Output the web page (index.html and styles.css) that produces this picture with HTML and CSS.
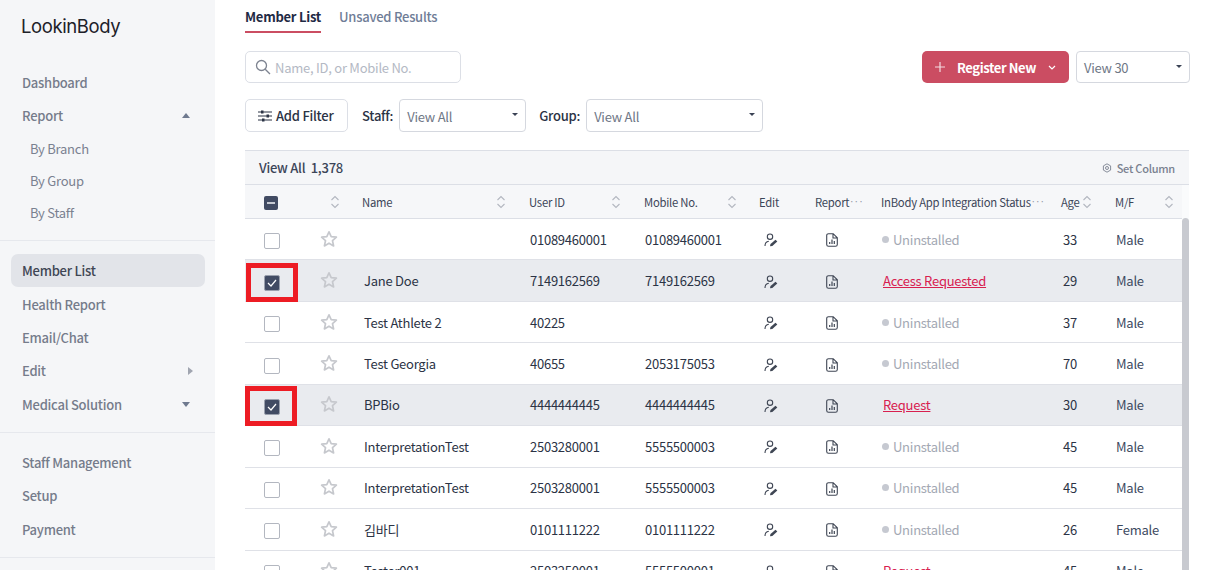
FILE: index.html
```html
<!DOCTYPE html>
<html lang="en">
<head>
<meta charset="utf-8">
<title>LookinBody</title>
<link rel="stylesheet" href="styles.css">
</head>
<body>
<svg class="defs" width="0" height="0">
  <symbol id="star" viewBox="0 0 18 18"><path d="M9 1.800l2.200 4.800 5.200.6-3.900 3.500 1.100 5.200L9 13.200l-4.600 2.700 1.100-5.200L1.600 7.200l5.200-.6z" fill="none" stroke="currentColor" stroke-width="1.700" stroke-linejoin="round"/></symbol>
  <symbol id="sort" viewBox="0 0 10 14"><path d="M1.500 5L5 1.500 8.500 5M1.500 9L5 12.500 8.500 9" fill="none" stroke="currentColor" stroke-width="1.100"/></symbol>
  <symbol id="edit" viewBox="0 0 14 14"><circle cx="6" cy="3.700" r="2.700" fill="none" stroke="currentColor" stroke-width="1.100"/><path d="M1 13c0-2.800 1.300-4.400 3.800-4.700" fill="none" stroke="currentColor" stroke-width="1.100"/><path d="M6 13.300l.5-2.200 5-4.300 1.800 1.800-5 4.300z" fill="currentColor"/></symbol>
  <symbol id="report" viewBox="0 0 12 14"><path d="M2.500.7h4.700L11.300 4.800V11.500a1.800 1.800 0 0 1-1.800 1.800h-7a1.800 1.800 0 0 1-1.800-1.800V2.500A1.800 1.800 0 0 1 2.500.7zM7 .7v4.300h4.300" fill="none" stroke="currentColor" stroke-width="1.100"/><path d="M3.700 11V9M6 11V6.500M8.300 11V8" stroke="currentColor" stroke-width="1.200"/></symbol>
</svg>
<div class="app">
  <aside class="sidebar">
    <div class="logo">LookinBody</div>
    <nav class="group group-first">
      <a class="item">Dashboard</a>
      <a class="item">Report<i class="caret caret-up"></i></a>
      <a class="sub">By Branch</a>
      <a class="sub">By Group</a>
      <a class="sub">By Staff</a>
    </nav>
    <nav class="group group-second">
      <a class="item active">Member List</a>
      <a class="item">Health Report</a>
      <a class="item">Email/Chat</a>
      <a class="item">Edit<i class="caret caret-right"></i></a>
      <a class="item">Medical Solution<i class="caret caret-down"></i></a>
    </nav>
    <nav class="group group-third">
      <a class="item">Staff Management</a>
      <a class="item">Setup</a>
      <a class="item">Payment</a>
    </nav>
  </aside>
  <main class="main">
    <div class="tabs">
      <a class="tab tab-active">Member List</a>
      <a class="tab">Unsaved Results</a>
    </div>
    <div class="bar bar-top">
      <label class="search">
        <svg class="search-icon" viewBox="0 0 16 16"><circle cx="6.500" cy="6.500" r="5" fill="none" stroke="currentColor" stroke-width="1.300"/><path d="M10.200 10.200L15 15" stroke="currentColor" stroke-width="1.300"/></svg>
        <span>Name, ID, or Mobile No.</span>
      </label>
      <div class="spring"></div>
      <button class="register">
        <svg class="plus" viewBox="0 0 10 10"><path d="M5 0v10M0 5h10" stroke="currentColor" stroke-width="1.200"/></svg>
        <span>Register New</span>
        <svg class="chev" viewBox="0 0 8 5"><path d="M1 1l3 3 3-3" fill="none" stroke="currentColor" stroke-width="1.200"/></svg>
      </button>
      <div class="select select-view">View 30<i class="sel-caret"></i></div>
    </div>
    <div class="bar bar-filter">
      <button class="filter">
        <svg class="filter-icon" viewBox="0 0 14 12"><path d="M0 2h14M0 6h14M0 10h14" stroke="currentColor" stroke-width="1.200"/><rect x="3" y=".5" width="2.500" height="3" fill="currentColor"/><rect x="8.500" y="4.500" width="2.500" height="3" fill="currentColor"/><rect x="4" y="8.500" width="2.500" height="3" fill="currentColor"/></svg>
        Add Filter
      </button>
      <span class="flabel flabel-staff">Staff:</span>
      <div class="select select-staff">View All<i class="sel-caret"></i></div>
      <span class="flabel flabel-group">Group:</span>
      <div class="select select-group">View All<i class="sel-caret"></i></div>
    </div>
    <section class="table">
      <div class="summary">
        <span>View All&nbsp; 1,378</span>
        <span class="setcol">
          <svg class="gear" viewBox="0 0 10 10"><path d="M5 .8l3.600 2.100v4.200L5 9.200 1.400 7.100V2.900z" fill="none" stroke="currentColor" stroke-width=".9"/><circle cx="5" cy="5" r="1.500" fill="none" stroke="currentColor" stroke-width=".9"/></svg>
          Set Column
        </span>
      </div>
      <div class="scrollarea">
        <div class="head cols">
          <div class="c-check"><span class="box box-mixed"></span></div>
          <div class="c-star hcell-end"><svg class="sort"><use href="#sort"/></svg></div>
          <div class="hcell hcell-name">Name<svg class="sort"><use href="#sort"/></svg></div>
          <div class="hcell">User ID<svg class="sort"><use href="#sort"/></svg></div>
          <div class="hcell hcell-mobile">Mobile No.<svg class="sort"><use href="#sort"/></svg></div>
          <div class="hcell">Edit</div>
          <div class="hcell hcell-text">Report<span class="more">···</span></div>
          <div class="hcell hcell-text">InBody App Integration Status<span class="more">···</span></div>
          <div class="hcell hcell-age">Age<svg class="sort"><use href="#sort"/></svg></div>
          <div class="hcell hcell-mf">M/F<svg class="sort"><use href="#sort"/></svg></div>
        </div>

        <div class="row cols">
          <div class="c-check"><span class="box"></span></div>
          <div class="c-star"><svg class="star"><use href="#star"/></svg></div>
          <div class="cell"></div>
          <div class="cell">01089460001</div>
          <div class="cell">01089460001</div>
          <div class="cell c-icon"><svg class="ic-edit"><use href="#edit"/></svg></div>
          <div class="cell c-icon"><svg class="ic-report"><use href="#report"/></svg></div>
          <div class="cell status"><i class="dot"></i>Uninstalled</div>
          <div class="cell age">33</div>
          <div class="cell sex">Male</div>
        </div>
        <div class="row cols selected">
          <div class="c-check marked"><span class="box box-on"><svg viewBox="0 0 10 8"><path d="M1 4l3 3 5-6" fill="none" stroke="#fff" stroke-width="1.200"/></svg></span></div>
          <div class="c-star"><svg class="star"><use href="#star"/></svg></div>
          <div class="cell">Jane Doe</div>
          <div class="cell">7149162569</div>
          <div class="cell">7149162569</div>
          <div class="cell c-icon"><svg class="ic-edit"><use href="#edit"/></svg></div>
          <div class="cell c-icon"><svg class="ic-report"><use href="#report"/></svg></div>
          <div class="cell cell-link"><a class="link">Access Requested</a></div>
          <div class="cell age">29</div>
          <div class="cell sex">Male</div>
        </div>
        <div class="row cols">
          <div class="c-check"><span class="box"></span></div>
          <div class="c-star"><svg class="star"><use href="#star"/></svg></div>
          <div class="cell">Test Athlete 2</div>
          <div class="cell">40225</div>
          <div class="cell"></div>
          <div class="cell c-icon"><svg class="ic-edit"><use href="#edit"/></svg></div>
          <div class="cell c-icon"><svg class="ic-report"><use href="#report"/></svg></div>
          <div class="cell status"><i class="dot"></i>Uninstalled</div>
          <div class="cell age">37</div>
          <div class="cell sex">Male</div>
        </div>
        <div class="row cols">
          <div class="c-check"><span class="box"></span></div>
          <div class="c-star"><svg class="star"><use href="#star"/></svg></div>
          <div class="cell">Test Georgia</div>
          <div class="cell">40655</div>
          <div class="cell">2053175053</div>
          <div class="cell c-icon"><svg class="ic-edit"><use href="#edit"/></svg></div>
          <div class="cell c-icon"><svg class="ic-report"><use href="#report"/></svg></div>
          <div class="cell status"><i class="dot"></i>Uninstalled</div>
          <div class="cell age">70</div>
          <div class="cell sex">Male</div>
        </div>
        <div class="row cols selected">
          <div class="c-check marked marked-second"><span class="box box-on"><svg viewBox="0 0 10 8"><path d="M1 4l3 3 5-6" fill="none" stroke="#fff" stroke-width="1.200"/></svg></span></div>
          <div class="c-star"><svg class="star"><use href="#star"/></svg></div>
          <div class="cell">BPBio</div>
          <div class="cell">4444444445</div>
          <div class="cell">4444444445</div>
          <div class="cell c-icon"><svg class="ic-edit"><use href="#edit"/></svg></div>
          <div class="cell c-icon"><svg class="ic-report"><use href="#report"/></svg></div>
          <div class="cell cell-link"><a class="link">Request</a></div>
          <div class="cell age">30</div>
          <div class="cell sex">Male</div>
        </div>
        <div class="row cols">
          <div class="c-check"><span class="box"></span></div>
          <div class="c-star"><svg class="star"><use href="#star"/></svg></div>
          <div class="cell">InterpretationTest</div>
          <div class="cell">2503280001</div>
          <div class="cell">5555500003</div>
          <div class="cell c-icon"><svg class="ic-edit"><use href="#edit"/></svg></div>
          <div class="cell c-icon"><svg class="ic-report"><use href="#report"/></svg></div>
          <div class="cell status"><i class="dot"></i>Uninstalled</div>
          <div class="cell age">45</div>
          <div class="cell sex">Male</div>
        </div>
        <div class="row cols">
          <div class="c-check"><span class="box"></span></div>
          <div class="c-star"><svg class="star"><use href="#star"/></svg></div>
          <div class="cell">InterpretationTest</div>
          <div class="cell">2503280001</div>
          <div class="cell">5555500003</div>
          <div class="cell c-icon"><svg class="ic-edit"><use href="#edit"/></svg></div>
          <div class="cell c-icon"><svg class="ic-report"><use href="#report"/></svg></div>
          <div class="cell status"><i class="dot"></i>Uninstalled</div>
          <div class="cell age">45</div>
          <div class="cell sex">Male</div>
        </div>
        <div class="row cols">
          <div class="c-check"><span class="box"></span></div>
          <div class="c-star"><svg class="star"><use href="#star"/></svg></div>
          <div class="cell">김바디</div>
          <div class="cell">0101111222</div>
          <div class="cell">0101111222</div>
          <div class="cell c-icon"><svg class="ic-edit"><use href="#edit"/></svg></div>
          <div class="cell c-icon"><svg class="ic-report"><use href="#report"/></svg></div>
          <div class="cell status"><i class="dot"></i>Uninstalled</div>
          <div class="cell age">26</div>
          <div class="cell sex">Female</div>
        </div>
        <div class="row cols">
          <div class="c-check"><span class="box"></span></div>
          <div class="c-star"><svg class="star"><use href="#star"/></svg></div>
          <div class="cell">Tester001</div>
          <div class="cell">2503250001</div>
          <div class="cell">5555500001</div>
          <div class="cell c-icon"><svg class="ic-edit"><use href="#edit"/></svg></div>
          <div class="cell c-icon"><svg class="ic-report"><use href="#report"/></svg></div>
          <div class="cell cell-link"><a class="link">Request</a></div>
          <div class="cell age">45</div>
          <div class="cell sex">Male</div>
        </div>
        <div class="thumb"></div>
      </div>
    </section>
  </main>
</div>
</body>
</html>
```
FILE: styles.css
```css
*, *::before, *::after { box-sizing: border-box; }
html, body { margin: 0; height: 100%; overflow: hidden; background: #fff; }
body { font-family: "Noto Sans CJK KR", "Noto Sans", sans-serif; font-size: 13px; letter-spacing: -.25px; color: #2b3345; }
.defs { position: absolute; }
.app { display: flex; height: 570px; overflow: hidden; }

.sidebar { width: 215px; flex: none; background: #f5f6f8; color: #757c8b; font-weight: 500; }
.logo { height: 66px; padding: 12px 0 0 21px; font-family: Inter, sans-serif; font-size: 18.500px; font-weight: 400; line-height: 28px; letter-spacing: -.4px; color: #1d2129; }
.group { border-bottom: 1px solid #e6e8ed; }
.group-first { padding-bottom: 11px; height: 175px; }
.group-second { padding-top: 13px; height: 192px; }
.group-third { padding-top: 13px; height: 125px; }
.item { display: flex; align-items: center; justify-content: space-between; height: 33.300px; padding: 0 22px; line-height: 1; }
.item.active { height: 33px; margin: 0 10px .5px 11px; padding: 0 11px; background: #e2e4e9; border-radius: 7px; color: #3f4654; }
.sub { display: flex; align-items: center; height: 32px; padding-left: 30px; font-weight: 400; color: #7a8190; }
.caret { width: 0; height: 0; border-style: solid; border-color: transparent; }
.caret-up { margin-right: 3px; border-width: 0 4px 5px; border-bottom-color: #6f7a8f; }
.caret-down { margin-right: 3px; border-width: 5px 4px 0; border-top-color: #6f7a8f; }
.caret-right { border-width: 4px 0 4px 5px; border-left-color: #a0a5b0; }

.main { flex: 1; padding: 0 27px 0 30px; min-width: 0; }
.tabs { display: flex; gap: 18px; height: 33px; }
.tab { height: 33px; padding-top: 7px; line-height: 20px; color: #6f7d97; font-weight: 500; }
.tab-active { color: #1f2a44; font-weight: 600; border-bottom: 2px solid #cb4d62; }
.bar { display: flex; align-items: center; }
.bar-top { margin-top: 18px; height: 32px; }
.bar-filter { margin-top: 16px; height: 33px; }
.spring { flex: 1; }
.search { display: flex; align-items: center; gap: 4px; width: 216px; height: 32px; padding-left: 9px; border: 1px solid #dcdfe6; border-radius: 5px; color: #b4b9c4; }
.search-icon { width: 16px; height: 16px; color: #7d8390; }
.register { display: flex; align-items: center; width: 147px; height: 32px; padding: 0; border: 0; border-radius: 5px; background: #cb4d62; color: #fff; font: 600 13px "Noto Sans CJK KR", sans-serif; letter-spacing: -.4px; }
.plus { width: 10px; height: 10px; margin: 0 12px 0 13px; opacity: .8; }
.chev { width: 8px; height: 5px; margin-left: 12px; }
.select { position: relative; display: flex; align-items: center; height: 32px; padding: 1px 0 0 7px; border: 1px solid #d5d8df; border-radius: 4px; color: #6f7786; background: #fff; }
.select-view { width: 114px; margin-left: 7px; }
.select-staff { width: 127px; height: 33px; }
.select-group { width: 177px; height: 33px; }
.sel-caret { position: absolute; right: 7px; top: 13px; width: 0; height: 0; border-style: solid; border-width: 3px 3px 0; border-color: #3a4254 transparent transparent; }
.filter { display: flex; align-items: center; gap: 4px; width: 103px; height: 33px; padding: 0 0 0 12px; border: 1px solid #dcdfe6; border-radius: 5px; background: #fff; color: #2b3345; font: 500 13px "Noto Sans CJK KR", sans-serif; letter-spacing: -.25px; }
.filter-icon { width: 14px; height: 12px; }
.flabel { color: #2b3345; font-weight: 500; }
.flabel-staff { margin: 0 6px 0 14px; }
.flabel-group { margin: 0 6px 0 13px; }

.table { width: 944px; margin-top: 18px; border-top: 1px solid #dcdfe6; }
.summary { display: flex; align-items: center; justify-content: space-between; height: 33px; padding: 0 14px; background: #f5f6f8; color: #3c4558; font-weight: 500; }
.setcol { display: flex; align-items: center; gap: 5px; font-size: 11px; color: #7a8190; }
.gear { width: 10px; height: 10px; }
.scrollarea { position: relative; border-top: 1px solid #dcdfe6; background: #fafbfc; }
.cols { display: grid; grid-template-columns: 56px 54px 166px 115px 115px 56px 66px 181px 53px 75px; width: 937px; }
.head { height: 34px; background: #f6f7f9; border-bottom: 1px solid #dcdfe6; font-size: 11.300px; color: #3c4558; align-items: center; }
.hcell { display: flex; align-items: center; justify-content: space-between; padding: 0 15px 0 8px; white-space: nowrap; overflow: hidden; }
.hcell-name { padding-left: 7px; }
.hcell-mobile { padding-right: 14px; }
.hcell-text { justify-content: flex-start; padding-right: 0; }
.hcell-age { padding: 0 15px 0 7px; }
.hcell-mf { padding: 0 8px; }
.hcell-end { justify-content: flex-end; padding-right: 15px; }
.more { font-size: 9px; letter-spacing: -.5px; color: #8d93a0; }
.sort { width: 10px; height: 14px; color: #b3b7c0; }
.row { height: 41.450px; border-bottom: 1px solid #dfe1e7; align-items: center; background: #fff; }
.row.selected { background: #e9ebef; }
.c-check { position: relative; display: flex; align-items: center; height: 100%; padding-left: 19px; }
.c-star { display: flex; justify-content: center; padding-left: 1px; }
.head .c-star { justify-content: flex-end; padding-left: 0; }
.cell { padding-left: 9px; white-space: nowrap; }
.c-icon { display: flex; padding-left: 13px; }
.box { display: flex; align-items: center; justify-content: center; width: 16px; height: 16px; margin-top: 4px; border: 1px solid #b3b7c0; border-radius: 2px; background: #fff; }
.box-mixed { width: 14px; height: 14px; margin-top: 2px; border: 0; background: #414b63; }
.box-mixed::after { content: ""; width: 8px; height: 2px; background: #c6cad3; }
.box-on { background: #414b63; border-color: #9aa0ad; }
.box-on svg { width: 10px; height: 8px; }
.marked::after { content: ""; position: absolute; left: 1px; top: 2.500px; width: 52px; height: 39px; border: 5px solid #ed1c24; }
.marked-second::after { left: 0; top: 1.200px; height: 40px; }
.star { width: 18px; height: 18px; margin-top: -1px; color: #c6c8cd; }
.ic-edit { width: 14px; height: 14px; margin-top: 2px; color: #3f4654; }
.c-icon:nth-child(7) { padding-left: 19px; }
.ic-report { width: 12px; height: 14px; margin-top: 2px; color: #3f4654; }
.status { display: flex; align-items: center; gap: 4px; color: #a3a8b3; }
.cell-link { padding-left: 10px; }
.dot { width: 7px; height: 7px; border-radius: 50%; background: #c6c9d1; }
.link { color: #d8204f; text-decoration: underline; }
.age { color: #2b3345; }
.sex { color: #3d4a5f; }
.thumb { position: absolute; left: 937px; top: 33px; width: 7px; height: 400px; background: #c8cad0; border-radius: 4px; }
```
